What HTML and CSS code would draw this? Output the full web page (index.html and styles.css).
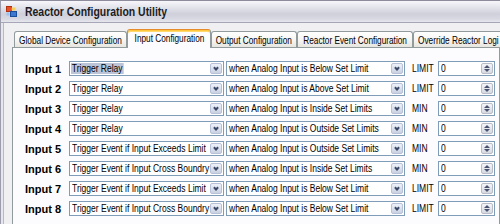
FILE: index.html
```html
<!DOCTYPE html>
<html lang="en">
<head>
    <meta charset="UTF-8">
    <title>Reactor Configuration Utility</title>
    <link rel="stylesheet" href="styles.css">
</head>
<body>
    <div class="window">
        <div class="titlebar">
            <svg class="app-icon" width="11" height="11" viewBox="0 0 11 11">
                <rect x="0.5" y="0.5" width="5" height="5" fill="#e8502a" stroke="#b03010"/>
                <rect x="5.5" y="1.5" width="4" height="3" fill="#f4d060"/>
                <rect x="4.5" y="5.5" width="6" height="5" fill="#3c78d0" stroke="#1c4c9c"/>
                <rect x="0.5" y="6.5" width="3" height="3" fill="#9cc0ec"/>
            </svg>
            <span class="title sq">Reactor Configuration Utility</span>
        </div>
        <div class="frame">
            <div class="client">
                <div class="tabs">
                    <div class="tab w1"><span class="sq">Global Device Configuration</span></div>
                    <div class="tab w2 active"><span class="sq">Input Configuration</span></div>
                    <div class="tab w3"><span class="sq">Output Configuration</span></div>
                    <div class="tab w4"><span class="sq">Reactor Event Configuration</span></div>
                    <div class="tab w5"><span class="sq">Override Reactor Logi</span></div>
                </div>
                <div class="page">
                    <div class="row">
                        <div class="name">Input 1</div>
                        <div class="combo action"><div class="value"><span class="sq hl">Trigger Relay</span></div><div class="drop"><i></i></div></div>
                        <div class="combo cond"><div class="value"><span class="sq">when Analog Input is Below Set Limit</span></div><div class="drop"><i></i></div></div>
                        <div class="kind"><span class="sq">LIMIT</span></div>
                        <div class="spin"><div class="value"><span class="sq">0</span></div><div class="spin-btn"><b class="up"></b><b class="down"></b></div></div>
                    </div>
                    <div class="row">
                        <div class="name">Input 2</div>
                        <div class="combo action"><div class="value"><span class="sq">Trigger Relay</span></div><div class="drop"><i></i></div></div>
                        <div class="combo cond"><div class="value"><span class="sq">when Analog Input is Above Set Limit</span></div><div class="drop"><i></i></div></div>
                        <div class="kind"><span class="sq">LIMIT</span></div>
                        <div class="spin"><div class="value"><span class="sq">0</span></div><div class="spin-btn"><b class="up"></b><b class="down"></b></div></div>
                    </div>
                    <div class="row">
                        <div class="name">Input 3</div>
                        <div class="combo action"><div class="value"><span class="sq">Trigger Relay</span></div><div class="drop"><i></i></div></div>
                        <div class="combo cond"><div class="value"><span class="sq">when Analog Input is Inside Set Limits</span></div><div class="drop"><i></i></div></div>
                        <div class="kind"><span class="sq">MIN</span></div>
                        <div class="spin"><div class="value"><span class="sq">0</span></div><div class="spin-btn"><b class="up"></b><b class="down"></b></div></div>
                    </div>
                    <div class="row">
                        <div class="name">Input 4</div>
                        <div class="combo action"><div class="value"><span class="sq">Trigger Relay</span></div><div class="drop"><i></i></div></div>
                        <div class="combo cond"><div class="value"><span class="sq">when Analog Input is Outside Set Limits</span></div><div class="drop"><i></i></div></div>
                        <div class="kind"><span class="sq">MIN</span></div>
                        <div class="spin"><div class="value"><span class="sq">0</span></div><div class="spin-btn"><b class="up"></b><b class="down"></b></div></div>
                    </div>
                    <div class="row">
                        <div class="name">Input 5</div>
                        <div class="combo action"><div class="value"><span class="sq">Trigger Event if Input Exceeds Limit</span></div><div class="drop"><i></i></div></div>
                        <div class="combo cond"><div class="value"><span class="sq">when Analog Input is Outside Set Limits</span></div><div class="drop"><i></i></div></div>
                        <div class="kind"><span class="sq">MIN</span></div>
                        <div class="spin"><div class="value"><span class="sq">0</span></div><div class="spin-btn"><b class="up"></b><b class="down"></b></div></div>
                    </div>
                    <div class="row">
                        <div class="name">Input 6</div>
                        <div class="combo action"><div class="value"><span class="sq">Trigger Event if Input Cross Boundry</span></div><div class="drop"><i></i></div></div>
                        <div class="combo cond"><div class="value"><span class="sq">when Analog Input is Inside Set Limits</span></div><div class="drop"><i></i></div></div>
                        <div class="kind"><span class="sq">MIN</span></div>
                        <div class="spin"><div class="value"><span class="sq">0</span></div><div class="spin-btn"><b class="up"></b><b class="down"></b></div></div>
                    </div>
                    <div class="row">
                        <div class="name">Input 7</div>
                        <div class="combo action"><div class="value"><span class="sq">Trigger Event if Input Exceeds Limit</span></div><div class="drop"><i></i></div></div>
                        <div class="combo cond"><div class="value"><span class="sq">when Analog Input is Below Set Limit</span></div><div class="drop"><i></i></div></div>
                        <div class="kind"><span class="sq">LIMIT</span></div>
                        <div class="spin"><div class="value"><span class="sq">0</span></div><div class="spin-btn"><b class="up"></b><b class="down"></b></div></div>
                    </div>
                    <div class="row">
                        <div class="name">Input 8</div>
                        <div class="combo action"><div class="value"><span class="sq">Trigger Event if Input Cross Boundry</span></div><div class="drop"><i></i></div></div>
                        <div class="combo cond"><div class="value"><span class="sq">when Analog Input is Below Set Limit</span></div><div class="drop"><i></i></div></div>
                        <div class="kind"><span class="sq">LIMIT</span></div>
                        <div class="spin"><div class="value"><span class="sq">0</span></div><div class="spin-btn"><b class="up"></b><b class="down"></b></div></div>
                    </div>
                </div>
            </div>
        </div>
    </div>
</body>
</html>
```

FILE: styles.css
```css
body {
    margin: 0;
    width: 500px;
    height: 224px;
    overflow: hidden;
    background: #ffffff;
    font-family: "Liberation Sans", Arial, sans-serif;
    color: #000000;
}

/* the screenshot is squeezed sideways, so text gets squeezed too */
.sq {
    display: inline-block;
    white-space: nowrap;
    transform: scaleX(.85);
    transform-origin: 0 50%;
}

.window {
    width: 500px;
    height: 224px;
    overflow: hidden;
    border-top: 1px solid #8c8c9c;
    border-left: 1px solid #9c9cac;
    box-sizing: border-box;
}

.titlebar {
    height: 22px;
    box-sizing: border-box;
    border-bottom: 1px solid #a6a6b6;
    background: linear-gradient(#f6f6fa 0%, #e4e4ec 30%, #d0d0dc 62%, #d8d8e3 85%, #e6e6ee 100%);
    display: flex;
    align-items: center;
    padding-left: 5px;
}

.app-icon {
    margin-right: 8px;
}

.title {
    font-size: 12px;
    font-weight: bold;
    color: #1c1c22;
    transform: scaleX(.87);
}

.frame {
    padding-left: 2px;
    background: #e6e6ee;
    height: 100%;
}

.client {
    border-left: 1px solid #b8b8c6;
    background: #f0f0f2;
    padding: 6px 0 0 8px;
    height: 100%;
}

.tabs {
    display: flex;
    align-items: flex-end;
    height: 18px;
    padding-left: 2px;
}

.tab {
    height: 16px;
    flex-shrink: 0;
    box-sizing: border-box;
    border: 1px solid #919b9c;
    border-bottom: none;
    border-radius: 3px 3px 0 0;
    background: linear-gradient(#ffffff, #f6f5f1 55%, #e6e5df);
    font-size: 11px;
    display: flex;
    align-items: center;
    justify-content: center;
}

.tab .sq {
    transform: scaleX(.75);
    transform-origin: 50% 50%;
}

.tab.active {
    height: 19px;
    margin-bottom: -1px;
    position: relative;
    z-index: 1;
    background: #fcfcfe;
    border-top: 1px solid #e68b2c;
    box-shadow: inset 0 1px #ffc73c, inset 0 2px #ffd96e;
    padding-bottom: 3px;
}

.w1 { width: 113px; }
.w2 { width: 84px; }
.w3 { width: 86px; }
.w4 { width: 116px; }
.w5 { width: 90px; justify-content: flex-start; padding-left: 4px; }

.tab.w5 .sq {
    transform-origin: 0 50%;
}

.page {
    border: 1px solid #919b9c;
    background: #fcfcfe;
    height: 190px;
    padding: 13px 0 0 12px;
}

.row {
    display: flex;
    align-items: center;
    height: 15px;
    margin-bottom: 5px;
}

.name {
    width: 44px;
    font-size: 11px;
    font-weight: bold;
    white-space: nowrap;
}

.combo, .spin {
    height: 15px;
    box-sizing: border-box;
    border: 1px solid #7f9db9;
    background: #ffffff;
    display: flex;
    align-items: center;
    padding: 0 1px 0 2px;
    font-size: 10px;
}

.combo.action {
    width: 155px;
    margin-right: 2px;
}

.combo.cond {
    width: 179px;
    margin-right: 7px;
}

.value {
    flex: 1;
    min-width: 0;
}

.hl {
    background: #bcc5d8;
    padding: 0 1px;
    margin-left: -1px;
}

.drop {
    width: 12px;
    height: 11px;
    box-sizing: border-box;
    border: 1px solid #b6c0d6;
    border-radius: 2px;
    background: linear-gradient(#eef1f8, #c9d1e2);
    display: flex;
    align-items: center;
    justify-content: center;
}

.drop i {
    width: 2px;
    height: 2px;
    border: solid #3c4a6a;
    border-width: 0 2px 2px 0;
    transform: rotate(45deg);
    margin-top: -2px;
}

.kind {
    width: 26px;
    font-size: 10px;
}

.spin {
    width: 57px;
}

.spin-btn {
    width: 12px;
    height: 11px;
    box-sizing: border-box;
    border: 1px solid #b8bcc8;
    border-radius: 2px;
    background: linear-gradient(#f4f5f8, #d6d9e2);
    display: flex;
    flex-direction: column;
    align-items: center;
    justify-content: center;
    gap: 1px;
}

.spin-btn b {
    width: 0;
    height: 0;
    border-left: 3px solid transparent;
    border-right: 3px solid transparent;
}

.spin-btn .up {
    border-bottom: 3px solid #4a5470;
}

.spin-btn .down {
    border-top: 3px solid #4a5470;
}
```
